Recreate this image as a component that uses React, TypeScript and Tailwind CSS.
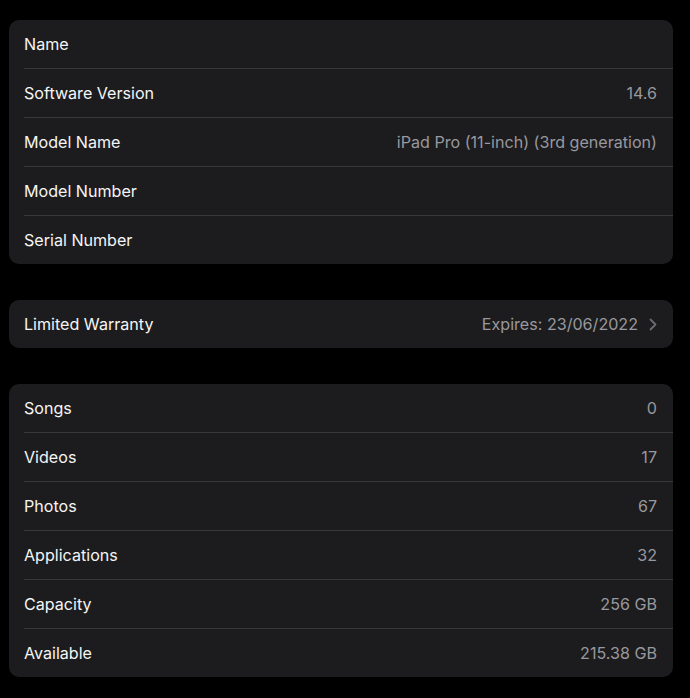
import React from "react";

type Row = { label: string; value?: string; chevron?: boolean };

const groups: Row[][] = [
  [
    { label: "Name" },
    { label: "Software Version", value: "14.6" },
    { label: "Model Name", value: "iPad Pro (11-inch) (3rd generation)" },
    { label: "Model Number" },
    { label: "Serial Number" },
  ],
  [{ label: "Limited Warranty", value: "Expires: 23/06/2022", chevron: true }],
  [
    { label: "Songs", value: "0" },
    { label: "Videos", value: "17" },
    { label: "Photos", value: "67" },
    { label: "Applications", value: "32" },
    { label: "Capacity", value: "256 GB" },
    { label: "Available", value: "215.38 GB" },
  ],
];

function Chevron() {
  return (
    <svg width="8" height="13" viewBox="0 0 8 13" className="ml-[11px]">
      <path d="M1.5 1.5 L6.5 6.5 L1.5 11.5" fill="none" stroke="#6b6b70" strokeWidth="1.8" strokeLinecap="round" strokeLinejoin="round" />
    </svg>
  );
}

export default function App() {
  return (
    <div
      className="min-h-[698px] w-[690px] bg-black pt-[20px] pl-[9px] pr-[17px] flex flex-col gap-[36px]"
      style={{ fontFamily: "Inter, 'Noto Sans', sans-serif" }}
    >
      {groups.map((rows, gi) => (
        <div key={gi} className="bg-[#1c1c1e] rounded-[10px] pl-[15px] overflow-hidden">
          {rows.map((r, i) => (
            <div
              key={i}
              className={
                "flex items-center pr-[16px] pt-[1px] " +
                (i < rows.length - 1 ? "h-[49px] border-b border-[#38383a]" : "h-[48px]")
              }
            >
              <span className="text-[#f5f5f5] text-[16.1px]">{r.label}</span>
              <span className="ml-auto flex items-center text-[#98989f] text-[16.1px]">
                {r.value}
                {r.chevron && <Chevron />}
              </span>
            </div>
          ))}
        </div>
      ))}
    </div>
  );
}
